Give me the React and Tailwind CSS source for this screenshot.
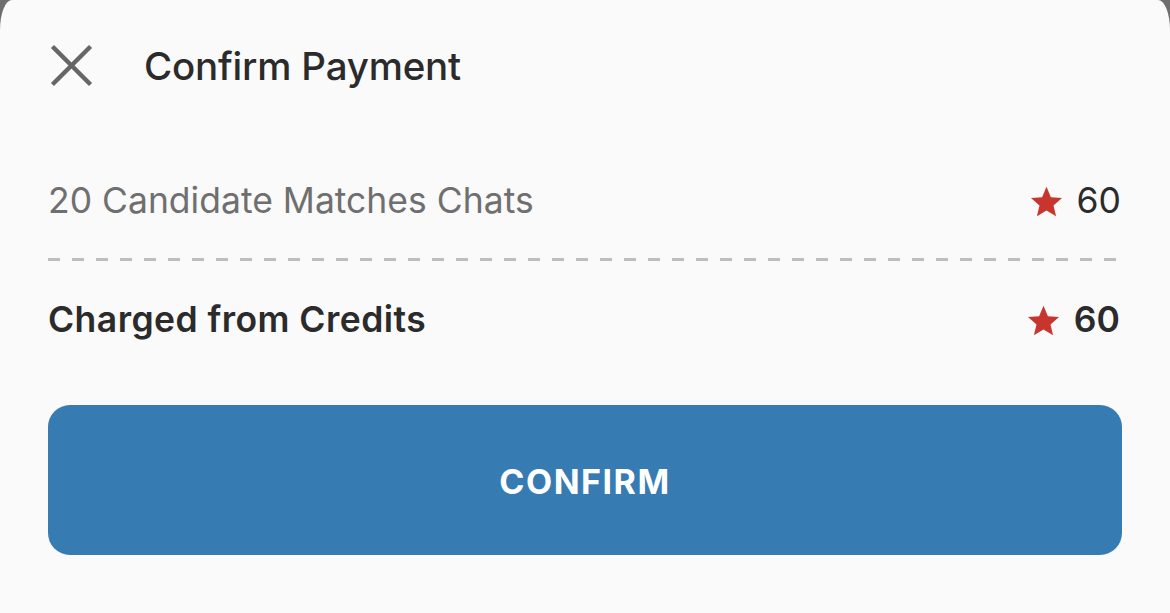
import React from "react";

function Star() {
  return (
    <svg width="31" height="31" viewBox="1.8 1.8 20.4 19.5" className="shrink-0">
      <path
        d="M12 1.8l2.9 6.9 7.3.6-5.6 4.8 1.7 7.2L12 17.4l-6.3 3.9 1.7-7.2L1.8 9.3l7.3-.6z"
        fill="#c8352f"
      />
    </svg>
  );
}

export default function App() {
  return (
    <div className="w-[1170px] h-[613px] bg-[#6e6e6e] overflow-hidden">
      <div
        className="h-full bg-[#fafafa] rounded-tl-[12px_30px] rounded-tr-[12px_30px] px-[48px] flex flex-col"
        style={{ fontFamily: "Inter, 'Noto Sans', sans-serif" }}
      >
        <div className="h-[134px] flex items-center shrink-0">
          <svg width="46" height="46" viewBox="0 0 46 46" className="ml-[-1px]">
            <path d="M7 4L42 39M42 4L7 39" stroke="#666666" strokeWidth="4.4" strokeLinecap="square" />
          </svg>
          <div className="ml-[51px] text-[38.5px] font-medium text-[#2b2b2b] tracking-[-0.2px]">
            Confirm Payment
          </div>
        </div>
        <div className="h-[124px] flex items-center justify-between shrink-0 pt-[10px]">
          <div className="text-[35.5px] text-[#6f6f6f] font-normal">20 Candidate Matches Chats</div>
          <div className="flex items-center gap-[15px] mr-[1px]">
            <Star />
            <span className="text-[35.5px] text-[#2b2b2b]">60</span>
          </div>
        </div>
        <div className="h-[3px] w-[1068px] shrink-0 bg-[repeating-linear-gradient(to_right,#bdbdbd_0_12px,transparent_12px_24px)]" />
        <div className="h-[118px] flex items-center justify-between shrink-0">
          <div className="text-[35.5px] text-[#2b2b2b] font-semibold tracking-[0.45px]">Charged from Credits</div>
          <div className="flex items-center gap-[15px] mr-[2px]">
            <Star />
            <span className="text-[35.5px] text-[#2b2b2b] font-semibold">60</span>
          </div>
        </div>
        <button className="mt-[26px] h-[150px] w-full rounded-[22px] bg-[#377bb3] text-white text-[34px] font-bold tracking-[1.5px] flex items-center justify-center shrink-0 pt-[3px]">
          CONFIRM
        </button>
      </div>
    </div>
  );
}
